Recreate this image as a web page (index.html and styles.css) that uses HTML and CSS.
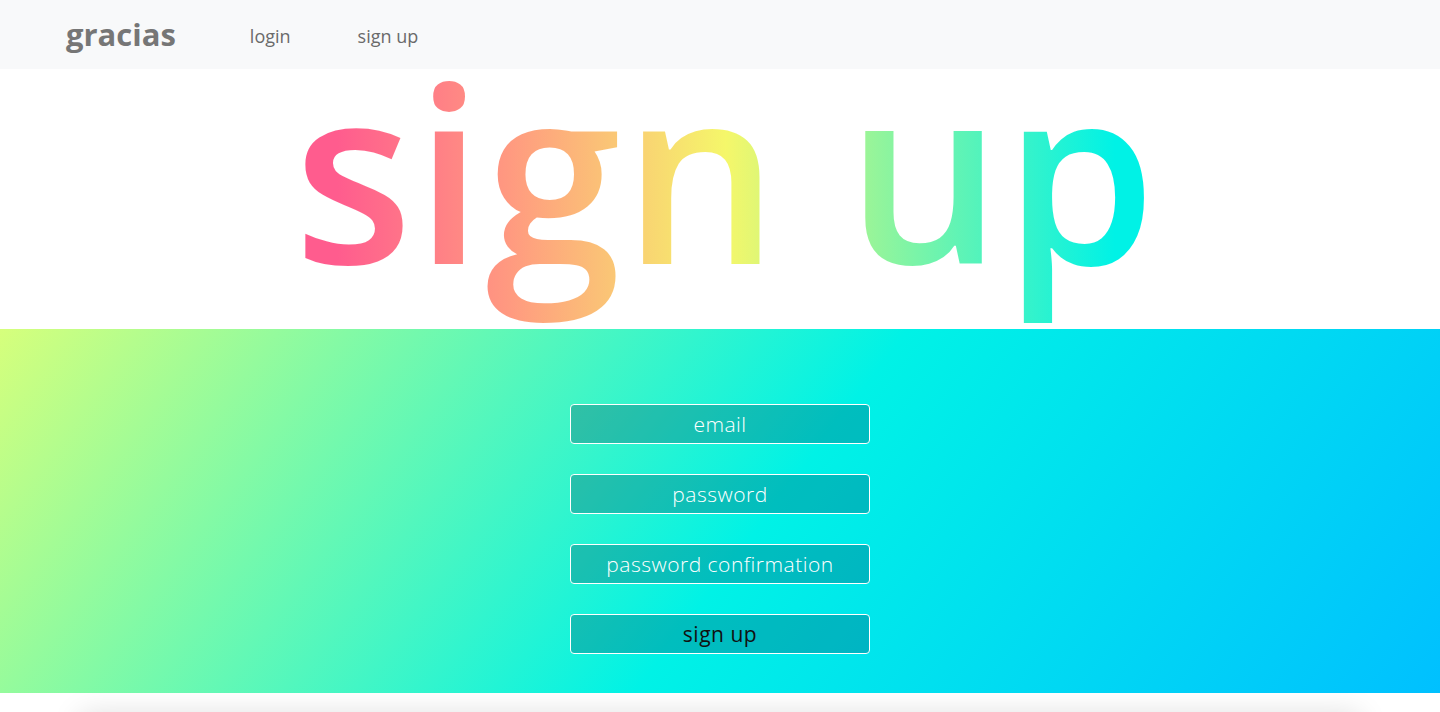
FILE: index.html
```html
<!DOCTYPE html>
<html lang="en">
<head>
<meta charset="utf-8">
<title>gracias - sign up</title>
<link rel="stylesheet" href="styles.css">
</head>
<body>
<nav class="navbar">
  <a class="brand" href="#">gracias</a>
  <a class="nav-link" href="#">login</a>
  <a class="nav-link" href="#">sign up</a>
</nav>
<header class="hero">
  <h1 class="title">sign up</h1>
</header>
<section class="form-section">
  <form class="form">
    <input class="field" type="email" placeholder="email">
    <input class="field" type="password" placeholder="password">
    <input class="field" type="password" placeholder="password confirmation">
    <button class="field submit" type="button">sign up</button>
  </form>
</section>
<div class="footer-wrap">
  <footer class="footer"></footer>
</div>
</body>
</html>
```
FILE: styles.css
```css
* { box-sizing: border-box; }
html, body { margin: 0; padding: 0; }
body {
  font-family: "Open Sans", "DejaVu Sans", sans-serif;
  background: #fff;
}
.navbar {
  height: 69px;
  background: #f8f9fa;
  display: flex;
  align-items: center;
  padding-left: 66px;
}
.brand {
  font-weight: 700;
  font-size: 31px;
  color: #767676;
  text-decoration: none;
  margin-right: 74px;
  padding-bottom: 2px;
}
.nav-link {
  font-size: 18px;
  color: #6a6a6a;
  text-decoration: none;
  margin-right: 67px;
  padding-top: 3px;
}
.hero {
  height: 260px;
  display: flex;
  justify-content: center;
  align-items: flex-start;
}
.title {
  margin: 0 0 0 12px;
  padding-bottom: 58px;
  font-size: 245px;
  line-height: 0.82;
  font-weight: 600;
  letter-spacing: 2px;
  background: linear-gradient(90deg, #ff5c8e 5%, #ff9a80 25%, #f5f76a 50%, #7af4a8 72%, #00f2e6 95%);
  -webkit-background-clip: text;
  background-clip: text;
  color: transparent;
}
.form-section {
  height: 364px;
  background: linear-gradient(127deg, #d6ff7c 0%, #00f2e6 53%, #00c0ff 100%);
  display: flex;
  justify-content: center;
  padding-top: 75px;
}
.form {
  display: flex;
  flex-direction: column;
  gap: 30px;
  width: 300px;
}
.field {
  height: 40px;
  width: 300px;
  border: 1px solid #fff;
  border-radius: 4px;
  background: rgba(0, 35, 70, 0.25);
  color: #fff;
  font-family: inherit;
  font-size: 21px;
  font-weight: 300;
  letter-spacing: 0.5px;
  text-align: center;
  outline: none;
}
.field::placeholder { color: #fff; opacity: 1; }
.submit { color: #111; font-weight: 400; }
.footer-wrap {
  height: 19px;
  overflow: hidden;
  padding: 22px 80px 0;
}
.footer {
  height: 40px;
  background: #fff;
  box-shadow: 0 0 30px rgba(0,0,0,0.14);
}
```
